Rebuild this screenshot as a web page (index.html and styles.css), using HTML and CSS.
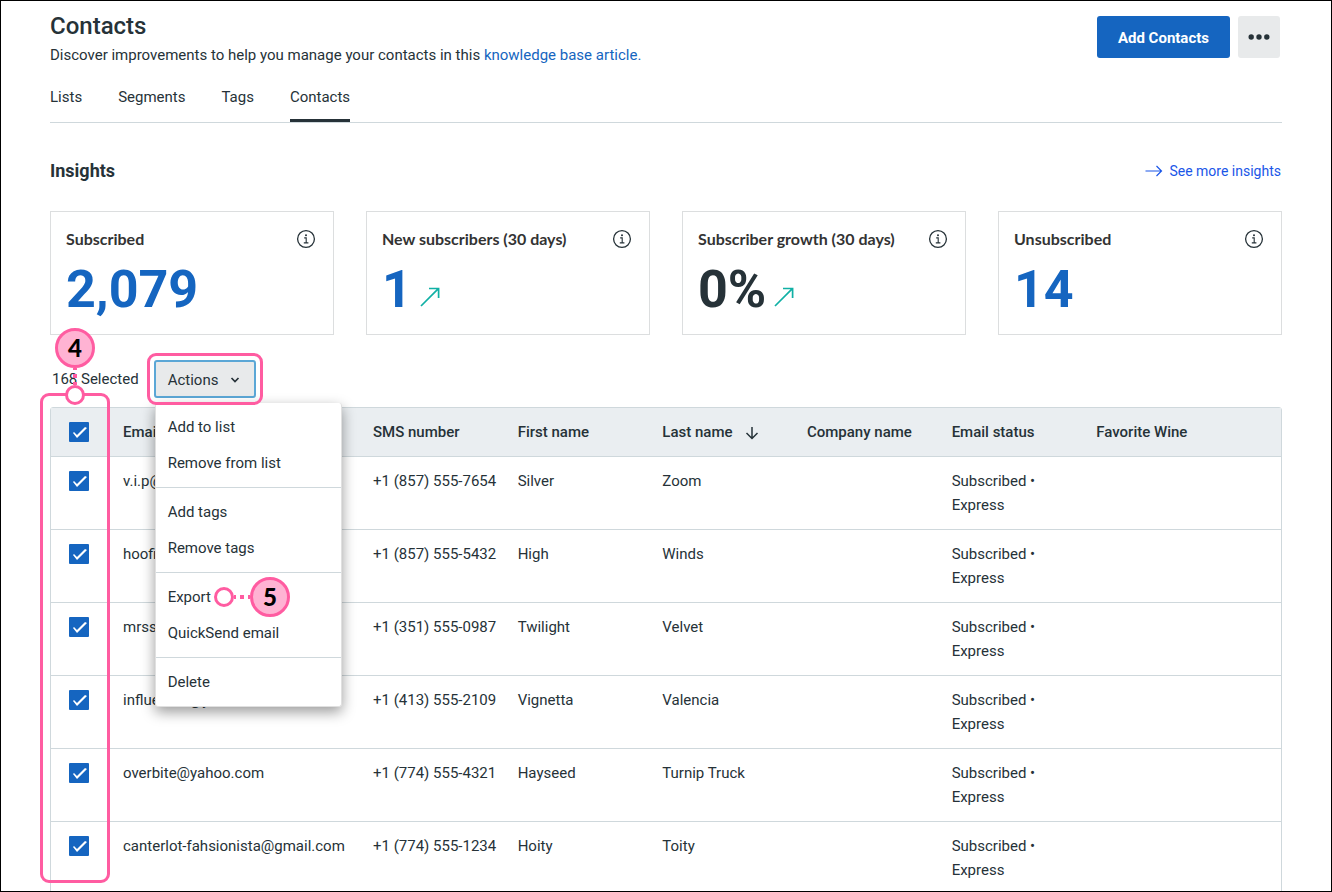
FILE: index.html
```html
<!DOCTYPE html>
<html lang="en">
<head>
    <meta charset="UTF-8">
    <meta name="viewport" content="width=device-width, initial-scale=1.0">
    <title>Contacts</title>
    <link rel="stylesheet" href="styles.css">
</head>
<body>

<!-- Shared icons -->
<svg class="icon-defs" aria-hidden="true">
    <symbol id="icon-info" viewBox="0 0 20 20">
        <circle cx="10" cy="10" r="8.4" fill="none" stroke="currentColor" stroke-width="1.3"/>
        <circle cx="10" cy="6.2" r="1" fill="currentColor"/>
        <path d="M8.2 8.9h2v4.8M7.8 13.9h4.6" fill="none" stroke="currentColor" stroke-width="1.1"/>
    </symbol>
    <symbol id="icon-trend" viewBox="0 0 20 20">
        <path d="M1 19L18.6 1.4M9 1.5h9.6V11" fill="none" stroke="currentColor" stroke-width="1.7"/>
    </symbol>
</svg>

<main class="page">
    <header class="page-header">
        <div>
            <h1>Contacts</h1>
            <p class="intro">Discover improvements to help you manage your contacts in this <a href="#">knowledge base article.</a></p>
        </div>
        <div class="header-buttons">
            <button class="btn-primary">Add Contacts</button>
            <button class="btn-more" aria-label="More">
                <svg width="22" height="6" viewBox="0 0 22 6"><circle cx="3.2" cy="3" r="2.7"/><circle cx="11" cy="3" r="2.7"/><circle cx="18.8" cy="3" r="2.7"/></svg>
            </button>
        </div>
    </header>

    <nav class="tabs">
        <a href="#">Lists</a>
        <a href="#">Segments</a>
        <a href="#">Tags</a>
        <a href="#" class="active">Contacts</a>
    </nav>

    <div class="insights-header">
        <h2>Insights</h2>
        <a href="#">
            <svg width="18" height="12" viewBox="0 0 18 12"><path d="M0.5 6h16M11.5 1l5 5-5 5"/></svg>
            See more insights
        </a>
    </div>

    <section class="cards">
        <div class="card">
            <div class="card-top"><h3>Subscribed</h3><svg class="info"><use href="#icon-info"/></svg></div>
            <div class="card-value">2,079</div>
        </div>
        <div class="card">
            <div class="card-top"><h3>New subscribers (30 days)</h3><svg class="info"><use href="#icon-info"/></svg></div>
            <div class="card-value">1 <svg class="trend"><use href="#icon-trend"/></svg></div>
        </div>
        <div class="card">
            <div class="card-top"><h3>Subscriber growth (30 days)</h3><svg class="info"><use href="#icon-info"/></svg></div>
            <div class="card-value dark">0% <svg class="trend"><use href="#icon-trend"/></svg></div>
        </div>
        <div class="card">
            <div class="card-top"><h3>Unsubscribed</h3><svg class="info"><use href="#icon-info"/></svg></div>
            <div class="card-value">14</div>
        </div>
    </section>

    <div class="toolbar">
        <span>168 Selected</span>
        <div class="actions">
            <button class="btn-actions">
                Actions
                <svg width="10" height="8" viewBox="0 0 10 8"><path d="M1.5 2L5 5.5 8.5 2"/></svg>
            </button>
            <div class="menu">
                <div class="menu-group">
                    <button>Add to list</button>
                    <button>Remove from list</button>
                </div>
                <div class="menu-group">
                    <button>Add tags</button>
                    <button>Remove tags</button>
                </div>
                <div class="menu-group">
                    <button>Export
                        <span class="callout callout-side"><i class="ring"></i><i class="dots"></i><b class="number">5</b></span>
                    </button>
                    <button>QuickSend email</button>
                </div>
                <div class="menu-group">
                    <button>Delete</button>
                </div>
            </div>
            <div class="highlight actions-highlight"></div>
        </div>
    </div>

    <div class="table-wrap">
        <table>
            <colgroup>
                <col class="col-check"><col class="col-email"><col><col><col><col><col><col><col class="col-end">
            </colgroup>
            <thead>
                <tr>
                    <th><input type="checkbox" aria-label="Select all" checked></th>
                    <th>Email</th>
                    <th>SMS number</th>
                    <th>First name</th>
                    <th>Last name <svg class="sort" width="14" height="14" viewBox="0 0 14 14"><path d="M7 1v11.5M1.5 7L7 12.5 12.5 7"/></svg></th>
                    <th>Company name</th>
                    <th>Email status</th>
                    <th>Favorite Wine</th>
                    <th></th>
                </tr>
            </thead>
            <tbody>
                <tr>
                    <td><input type="checkbox" aria-label="Select Silver Zoom" checked></td>
                    <td>v.i.p@gmail.com</td><td>+1 (857) 555-7654</td><td>Silver</td><td>Zoom</td><td></td><td>Subscribed • Express</td><td></td><td></td>
                </tr>
                <tr>
                    <td><input type="checkbox" aria-label="Select High Winds" checked></td>
                    <td>hoofin@gmail.com</td><td>+1 (857) 555-5432</td><td>High</td><td>Winds</td><td></td><td>Subscribed • Express</td><td></td><td></td>
                </tr>
                <tr>
                    <td><input type="checkbox" aria-label="Select Twilight Velvet" checked></td>
                    <td>mrssparkle@aol.com</td><td>+1 (351) 555-0987</td><td>Twilight</td><td>Velvet</td><td></td><td>Subscribed • Express</td><td></td><td></td>
                </tr>
                <tr>
                    <td><input type="checkbox" aria-label="Select Vignetta Valencia" checked></td>
                    <td>influencer@yahoo.com</td><td>+1 (413) 555-2109</td><td>Vignetta</td><td>Valencia</td><td></td><td>Subscribed • Express</td><td></td><td></td>
                </tr>
                <tr>
                    <td><input type="checkbox" aria-label="Select Hayseed Turnip Truck" checked></td>
                    <td>overbite@yahoo.com</td><td>+1 (774) 555-4321</td><td>Hayseed</td><td>Turnip Truck</td><td></td><td>Subscribed • Express</td><td></td><td></td>
                </tr>
                <tr>
                    <td><input type="checkbox" aria-label="Select Hoity Toity" checked></td>
                    <td>canterlot-fahsionista@gmail.com</td><td>+1 (774) 555-1234</td><td>Hoity</td><td>Toity</td><td></td><td>Subscribed • Express</td><td></td><td></td>
                </tr>
            </tbody>
        </table>
        <div class="highlight column-highlight">
            <span class="callout callout-top"><b class="number">4</b><i class="dots"></i><i class="ring"></i></span>
        </div>
    </div>
</main>

</body>
</html>
```

FILE: styles.css
```css
* {
    box-sizing: border-box;
}

body {
    margin: 0;
    height: 100vh;
    overflow: hidden;
    border: 1px solid #000;
    background: #fff;
    color: #263238;
    font-family: Roboto, sans-serif;
    font-size: 15px;
    line-height: 24px;
}

h1, h2, h3, p {
    margin: 0;
}

a {
    color: #1565c0;
    text-decoration: none;
}

button {
    font: inherit;
    color: inherit;
    border: none;
    cursor: pointer;
}

.icon-defs {
    position: absolute;
    width: 0;
    height: 0;
}

.page {
    padding: 9px 49px 0;
}

/* Header */
.page-header {
    display: flex;
    justify-content: space-between;
    align-items: flex-start;
}

h1 {
    margin-bottom: 1px;
    font-size: 24px;
    line-height: 32px;
    font-weight: 500;
}

.header-buttons {
    display: flex;
    gap: 8px;
    padding: 6px 2px 0 0;
}

.btn-primary {
    height: 42px;
    padding: 2px 21px 0;
    border-radius: 3px;
    background: #1565c0;
    color: #fff;
    font-weight: 700;
}

.btn-more {
    display: flex;
    align-items: center;
    justify-content: center;
    width: 42px;
    height: 42px;
    padding: 0;
    border-radius: 3px;
    background: #e8eaeb;
    fill: #263238;
}

/* Tabs */
.tabs {
    display: flex;
    gap: 36px;
    margin-top: 18px;
    border-bottom: 1px solid #cfd8dc;
}

.tabs a {
    padding-bottom: 10px;
    border-bottom: 3px solid transparent;
    color: #263238;
}

.tabs .active {
    border-color: #263238;
}

/* Insights */
.insights-header {
    display: flex;
    justify-content: space-between;
    margin: 36px 0 28px;
}

.insights-header a {
    display: flex;
    align-items: center;
    gap: 6px;
    padding-right: 1px;
    color: #1a56e8;
    font-size: 14px;
}

.insights-header svg {
    fill: none;
    stroke: currentColor;
    stroke-width: 1.2;
}

h2 {
    font-size: 18px;
    line-height: 24px;
    font-weight: 700;
}

.cards {
    display: grid;
    grid-template-columns: repeat(4, 1fr);
    gap: 32px;
}

.card {
    height: 124px;
    padding: 15px;
    border: 1px solid #dcdedf;
}

.card-top {
    display: flex;
    justify-content: space-between;
    align-items: center;
    padding-right: 2px;
}

h3 {
    font-family: Lato, sans-serif;
    font-size: 16px;
    line-height: 24px;
    font-weight: 700;
    color: #333;
}

.info {
    width: 20px;
    height: 20px;
}

.card-value {
    display: flex;
    align-items: baseline;
    gap: 8px;
    color: #1565c0;
    font-size: 52px;
    line-height: 78px;
    font-weight: 700;
}

.dark {
    color: #263238;
}

.trend {
    width: 20px;
    height: 20px;
    color: #10b0a5;
}

/* Toolbar */
.toolbar {
    display: flex;
    align-items: center;
    gap: 15px;
    padding: 25px 2px 9px;
}

.actions {
    position: relative;
    z-index: 2;
}

.btn-actions {
    display: flex;
    align-items: center;
    gap: 12px;
    height: 38px;
    padding: 2px 14px 0 12px;
    border: 2px solid #5ba7d6;
    border-radius: 3px;
    background: #e8eaeb;
}

.btn-actions svg {
    fill: none;
    stroke: currentColor;
    stroke-width: 1.7;
}

.menu {
    position: absolute;
    top: 43px;
    left: 1px;
    width: 187px;
    border: solid #e0e0e0;
    border-width: 0 1px 1px;
    border-radius: 3px;
    background: #fff;
    box-shadow: 0 5px 14px rgba(0, 0, 0, 0.4);
}

.menu-group {
    padding: 6px 0;
}

.menu-group + .menu-group {
    border-top: 1px solid #cfd8dc;
}

.menu button {
    display: flex;
    align-items: center;
    width: 100%;
    height: 36px;
    padding: 0 12px;
    background: none;
}

/* Table */
.table-wrap {
    position: relative;
    border: 1px solid #cfd8dc;
    border-radius: 3px;
}

table {
    width: 100%;
    table-layout: fixed;
    border-collapse: collapse;
}

.col-check,
.col-end {
    width: 56px;
}

.col-email {
    width: 250px;
}

th, td {
    padding: 12px 0 12px 16px;
    text-align: left;
    vertical-align: top;
    border-bottom: 1px solid #cfd8dc;
}

th {
    background: #eaeef1;
    font-weight: 500;
}

td {
    padding-right: 16px;
}

td:nth-child(2),
td:nth-child(3) {
    padding-right: 0;
}

th:first-child,
td:first-child {
    padding: 14px 0 0 18px;
}

input[type="checkbox"] {
    display: block;
    appearance: none;
    width: 20px;
    height: 20px;
    margin: 0;
    border-radius: 1px;
    background: #1565c0;
}

input[type="checkbox"]:checked::before {
    content: "";
    display: block;
    width: 20px;
    height: 20px;
    background: #fff;
    clip-path: polygon(4px 11px, 5px 10px, 8px 13px, 16px 5px, 18px 6px, 8px 16px);
}

.sort {
    margin-left: 9px;
    vertical-align: -3px;
    fill: none;
    stroke: currentColor;
    stroke-width: 1.5;
}

/* Numbered callouts */
.highlight {
    position: absolute;
    border: 3px solid #ff5ca1;
    border-radius: 9px;
    pointer-events: none;
}

.actions-highlight {
    inset: -7px;
}

.column-highlight {
    z-index: 3;
    top: -15px;
    left: -11px;
    width: 70px;
    height: 490px;
}

.callout {
    display: flex;
    align-items: center;
}

.callout-top {
    position: absolute;
    top: -68px;
    left: 12px;
    flex-direction: column;
}

.callout-side {
    margin-left: 3px;
}

.number {
    display: flex;
    align-items: center;
    justify-content: center;
    width: 40px;
    height: 40px;
    border: 3px solid #ff5ca1;
    border-radius: 50%;
    background: #ffb3d3;
    color: #000;
    font-family: Lato, sans-serif;
    font-size: 24px;
    font-weight: 900;
}

.ring {
    width: 20px;
    height: 20px;
    border: 3px solid #ff5ca1;
    border-radius: 50%;
    background: #fff;
}

.callout-side .dots {
    width: 16px;
    height: 4px;
    background: repeating-linear-gradient(90deg, #ff5ca1 0 2px, transparent 2px 6px, #ff5ca1 6px 8px);
}

.callout-top .dots {
    width: 4px;
    height: 17px;
    background: repeating-linear-gradient(#ff5ca1 0 2px, transparent 2px 6px, #ff5ca1 6px 8px);
}
```
